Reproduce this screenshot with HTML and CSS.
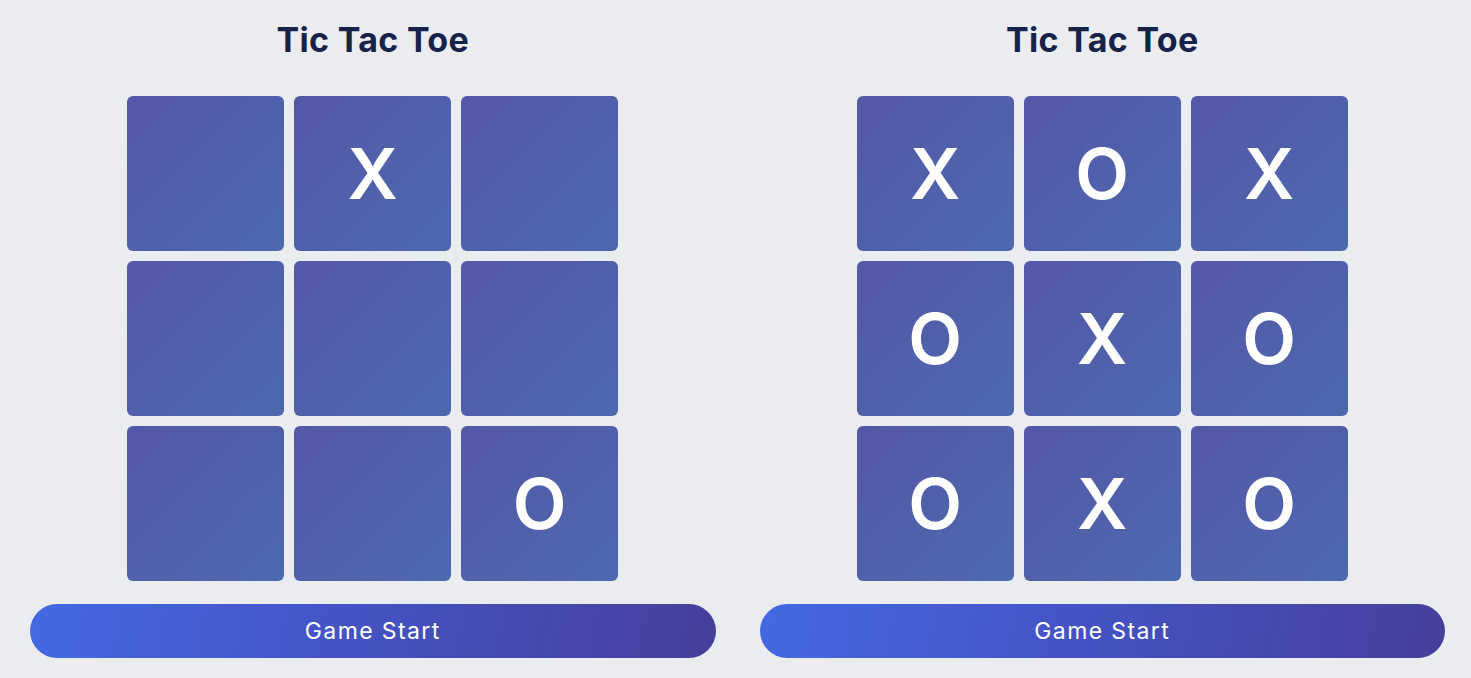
FILE: index.html
```html
<!DOCTYPE html>
<html lang="en">

<head>
    <meta charset="UTF-8">
    <meta name="viewport" content="width=device-width, initial-scale=1.0">
    <title>Tic Tac Toe</title>
    <link rel="stylesheet" href="styles.css">
</head>

<body>
    <div class="boards">
        <div class="game">
            <h1>Tic Tac Toe</h1>
            <div class="board">
                <div class="cell"></div>
                <div class="cell">X</div>
                <div class="cell"></div>
                <div class="cell"></div>
                <div class="cell"></div>
                <div class="cell"></div>
                <div class="cell"></div>
                <div class="cell"></div>
                <div class="cell">O</div>
            </div>
            <button class="start">Game Start</button>
        </div>

        <div class="game">
            <h1>Tic Tac Toe</h1>
            <div class="board">
                <div class="cell">X</div>
                <div class="cell">O</div>
                <div class="cell">X</div>
                <div class="cell">O</div>
                <div class="cell">X</div>
                <div class="cell">O</div>
                <div class="cell">O</div>
                <div class="cell">X</div>
                <div class="cell">O</div>
            </div>
            <button class="start">Game Start</button>
        </div>
    </div>
</body>

</html>
```

FILE: styles.css
```css
body {
    margin: 0;
    font-family: Inter, "Liberation Sans", Arial, sans-serif;
    background-color: #ebecef;
}

.boards {
    display: flex;
    gap: 44px;
    padding: 20px 26px 0 30px;
}

.game {
    flex: 1;
    display: flex;
    flex-direction: column;
    align-items: center;
}

h1 {
    margin: 0;
    font-size: 34px;
    line-height: 40px;
    font-weight: 700;
    letter-spacing: 0.3px;
    color: #17224a;
}

.board {
    display: grid;
    grid-template-columns: repeat(3, 157px);
    grid-template-rows: repeat(3, 155px);
    gap: 10px;
    margin-top: 36px;
}

.cell {
    display: flex;
    justify-content: center;
    align-items: center;
    border-radius: 6px;
    background: linear-gradient(135deg, #5557a7, #4c69ae);
    color: #fff;
    font-size: 70px;
    font-weight: 600;
}

.start {
    width: 100%;
    height: 54px;
    margin-top: 23px;
    border: none;
    border-radius: 27px;
    background: linear-gradient(100deg, #4469e2, #4452c2 50%, #463f9a);
    color: #fff;
    font-family: inherit;
    font-size: 23px;
    letter-spacing: 1.4px;
    cursor: pointer;
}
```
